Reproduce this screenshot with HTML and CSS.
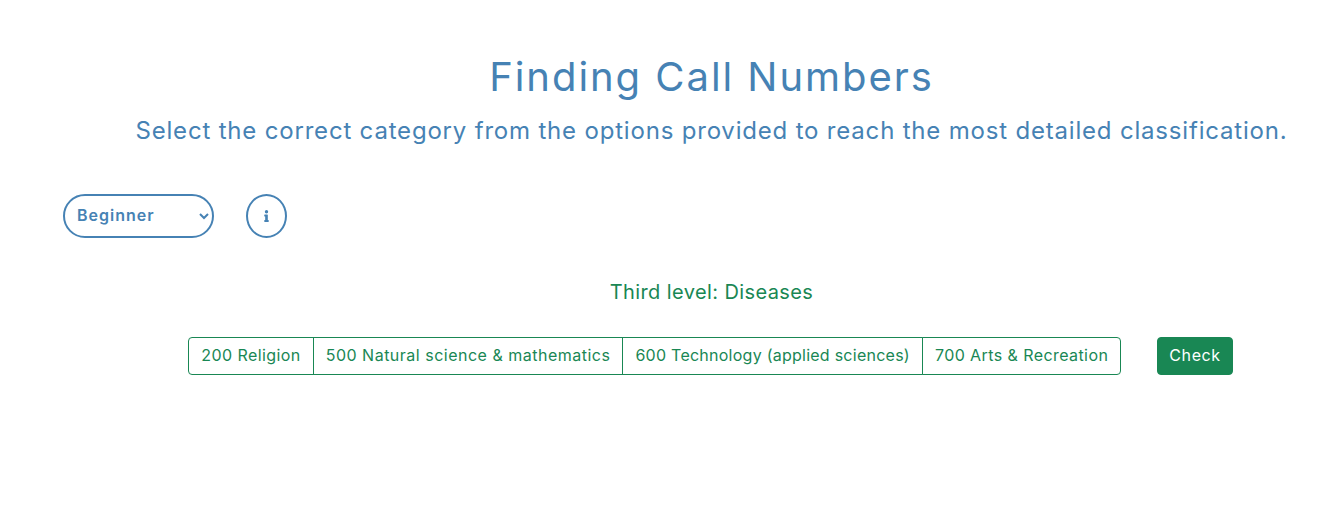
FILE: index.html
```html
<!DOCTYPE html>
<html lang="en">
<head>
<meta charset="utf-8">
<title>Finding Call Numbers</title>
<link rel="stylesheet" href="styles.css">
</head>
<body>
<main class="page">
  <header class="intro">
    <h1 class="title">Finding Call Numbers</h1>
    <p class="subtitle">Select the correct category from the options provided to reach the most detailed classification.</p>
  </header>
  <div class="controls">
    <select class="level-select" aria-label="Level">
      <option>Beginner</option>
      <option>Intermediate</option>
      <option>Advanced</option>
    </select>
    <button class="info-btn" type="button" aria-label="Information">
      <svg class="info-icon" viewBox="0 0 192 512" width="5" height="12" aria-hidden="true"><path fill="currentColor" d="M20 424h20V280H20c-11 0-20-9-20-20v-48c0-11 9-20 20-20h112c11 0 20 9 20 20v212h20c11 0 20 9 20 20v48c0 11-9 20-20 20H20c-11 0-20-9-20-20v-48c0-11 9-20 20-20zM96 0a72 72 0 1 0 0 144A72 72 0 0 0 96 0z"/></svg>
    </button>
  </div>
  <h2 class="level-label">Third level: Diseases</h2>
  <div class="answer-row">
    <div class="options">
      <button class="option option-religion" type="button">200 Religion</button>
      <button class="option option-science" type="button">500 Natural science &amp; mathematics</button>
      <button class="option option-technology" type="button">600 Technology (applied sciences)</button>
      <button class="option option-arts" type="button">700 Arts &amp; Recreation</button>
    </div>
    <button class="check" type="button">Check</button>
  </div>
</main>
</body>
</html>
```
FILE: styles.css
```css
* { box-sizing: border-box; }
html, body { margin: 0; padding: 0; background: #fff; }
body {
  height: 508px;
  overflow: hidden;
  font-family: "Inter", "Open Sans", sans-serif;
  color: #4682b4;
}
.page { display: flex; flex-direction: column; }
.intro {
  display: flex;
  flex-direction: column;
  align-items: center;
  padding: 52px 0 0 87px;
}
.title {
  margin: 0;
  font-size: 40px;
  line-height: 50px;
  font-weight: 400;
  letter-spacing: 1.95px;
}
.subtitle {
  margin: 14px 0 0;
  font-size: 24px;
  line-height: 30px;
  font-weight: 400;
  letter-spacing: 0.81px;
}
.controls {
  display: flex;
  align-items: center;
  gap: 32px;
  margin: 48px 0 0 63px;
}
.level-select {
  width: 151px;
  height: 44px;
  padding: 0 8px 2px 8px;
  border: 2px solid #4682b4;
  border-radius: 22px;
  background: #fff;
  color: #4682b4;
  font: 600 16px "Inter", sans-serif;
  letter-spacing: 1px;
}
.info-btn {
  display: flex;
  align-items: center;
  justify-content: center;
  width: 41px;
  height: 44px;
  padding: 0;
  border: 2px solid #4682b4;
  border-radius: 50%;
  background: #fff;
  color: #4682b4;
}
.level-label {
  margin: 42px 0 0 87px;
  text-align: center;
  color: #198754;
  font-size: 20px;
  line-height: 24px;
  font-weight: 400;
  letter-spacing: 0.4px;
}
.answer-row {
  display: flex;
  justify-content: center;
  gap: 36px;
  margin: 33px 0 0 85px;
}
.options { display: flex; }
.option {
  height: 38px;
  padding: 0 12px 2px;
  margin-left: -1px;
  border: 1px solid #198754;
  background: #fff;
  color: #198754;
  font: 400 16px "Inter", sans-serif;
  white-space: nowrap;
}
.option:first-child { margin-left: 0; border-radius: 4px 0 0 4px; }
.option:last-child { border-radius: 0 4px 4px 0; }
.option-religion { letter-spacing: 0.42px; }
.option-science { letter-spacing: 0.5px; }
.option-technology { letter-spacing: 0.25px; }
.option-arts { letter-spacing: 0.42px; }
.check {
  height: 38px;
  padding: 0 11px 2px;
  border: 1px solid #198754;
  border-radius: 4px;
  background: #198754;
  color: #fff;
  font: 400 16px "Inter", sans-serif;
  letter-spacing: 0.6px;
}
```
